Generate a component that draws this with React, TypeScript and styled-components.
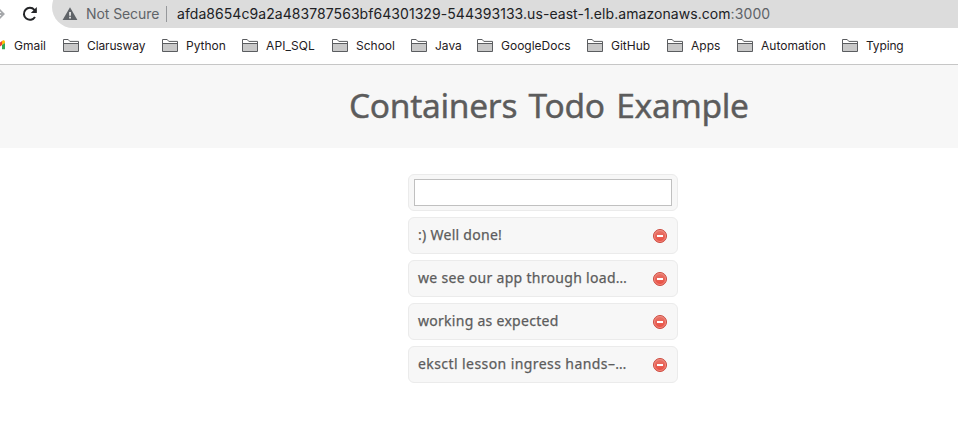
import React from 'react';
import styled, { createGlobalStyle } from 'styled-components';

const GlobalStyle = createGlobalStyle`
  *, *::before, *::after { box-sizing: border-box; }
  body { margin: 0; background: #fff; overflow: hidden; }
  svg { display: block; flex: none; }
`;

const Toolbar = styled.div`
  display: flex;
  height: 28px;
  font: 14px/28px Inter, sans-serif;
  overflow: hidden;
`;

const NavButtons = styled.div`
  display: flex;
  width: 52px;
  flex: none;
  gap: 16px;
`;

const AddressBar = styled.div`
  display: flex;
  flex: 1;
  height: 42px;
  margin-top: -14px;
  padding: 14px 0 0 10px;
  border-radius: 21px 0 0 21px;
  background: #dcdcdc;
  white-space: nowrap;
`;

const Security = styled.span`
  width: 73px;
  flex: none;
  margin-left: 8px;
  color: #5f6368;
  letter-spacing: -0.08px;
`;

const Divider = styled.i`
  flex: none;
  width: 1px;
  height: 16px;
  margin: 6px 10px 0 7px;
  background: #96989b;
`;

const Url = styled.span`
  color: #202124;
  letter-spacing: 0.06px;
`;

const Port = styled.span`
  color: #5f6368;
  letter-spacing: 0.1px;
`;

const Bookmarks = styled.nav`
  display: flex;
  height: 37px;
  border-bottom: 1px solid #c6c6c6;
  font: 12px/35px Inter, sans-serif;
  color: #1f2023;
  white-space: nowrap;
`;

const Bookmark = styled.div<{ $width: number; $spacing?: number }>`
  display: flex;
  flex: none;
  width: ${(p) => p.$width}px;
  letter-spacing: ${(p) => p.$spacing ?? 0}px;
  svg { margin: 11px 8px 0 0; }
`;

const Header = styled.header`
  height: 83px;
  padding-left: 349px;
  background: #f7f7f7;
`;

const Title = styled.h1`
  margin: 0;
  font: 400 33.5px/80px "Noto Sans", sans-serif;
  letter-spacing: -0.3px;
  word-spacing: 3px;
  color: #5c5c5c;
  -webkit-text-stroke: 0.4px #5c5c5c;
  white-space: nowrap;
`;

const TodoList = styled.main`
  display: flex;
  flex-direction: column;
  gap: 6px;
  width: 270px;
  margin: 26px 0 0 408px;
`;

const Card = styled.div`
  display: flex;
  height: 37px;
  border: 1px solid #ebebeb;
  border-radius: 6px;
  background: #f7f7f7;
`;

const InputCard = styled(Card)`
  padding: 4px 5px;
`;

const TodoInput = styled.input`
  width: 100%;
  height: 27px;
  padding: 0 6px;
  border: 1px solid #c0c0c0;
  outline: none;
  background: #fff;
  font: 14px "Noto Sans", sans-serif;
`;

const TodoText = styled.span<{ $spacing: number }>`
  flex: 1;
  padding-left: 9px;
  font: 14px/33px "Noto Sans", sans-serif;
  letter-spacing: ${(p) => p.$spacing}px;
  color: #5c5c5c;
  -webkit-text-stroke: 0.25px #5c5c5c;
  white-space: nowrap;
`;

const DeleteButton = styled.button`
  width: 16px;
  height: 16px;
  margin: 10px 9px 0 0;
  padding: 0;
  border: 0;
  background: none;
`;

const bookmarks = [
  { label: 'Clarusway', width: 99, spacing: -0.13 },
  { label: 'Python', width: 80 },
  { label: 'API_SQL', width: 90, spacing: 0.1 },
  { label: 'School', width: 79 },
  { label: 'Java', width: 66 },
  { label: 'GoogleDocs', width: 110 },
  { label: 'GitHub', width: 80 },
  { label: 'Apps', width: 70 },
  { label: 'Automation', width: 105 },
  { label: 'Typing', width: 62, spacing: -0.15 },
];

const todos = [
  { text: ':) Well done!', spacing: 0.28 },
  { text: 'we see our app through load…', spacing: 0.3 },
  { text: 'working as expected', spacing: 0.28 },
  { text: 'eksctl lesson ingress hands–…', spacing: 0.42 },
];

const FolderIcon = () => (
  <svg width="16" height="13" viewBox="0 0 16 13">
    <path d="M.5 4.5h15v8H.5z" fill="#c9c9c9" />
    <path d="M.5 12.5V.5h4.7l1.6 1.9h8.7v10.1zM.5 4.5h15" fill="none" stroke="#5b5d60" />
  </svg>
);

const RemoveIcon = () => (
  <svg width="16" height="16" viewBox="0 0 16 16">
    <defs>
      <linearGradient id="remove-fill" x2="0" y2="1">
        <stop stopColor="#e8786c" />
        <stop offset="1" stopColor="#ea4a3e" />
      </linearGradient>
    </defs>
    <circle cx="8" cy="8" r="6.5" fill="url(#remove-fill)" stroke="#cc4b40" />
    <circle cx="8" cy="8" r="5.5" fill="none" stroke="#f0958b" strokeWidth=".8" />
    <path d="M5 7h6v2H5z" fill="#fff" />
  </svg>
);

export default function App() {
  return (
    <>
      <GlobalStyle />
      <Toolbar>
        <NavButtons>
          <svg width="5" height="28" viewBox="0 0 5 28">
            <path d="M-3 14h7M-1.4 8.9 3.7 14l-5.1 5.1" fill="none" stroke="#a5a7aa" strokeWidth="1.8" />
          </svg>
          <svg width="18" height="28" viewBox="0 0 18 28">
            <path d="M14 17a6 6 0 1 1-.6-7.2L15 11.6" fill="none" stroke="#232427" strokeWidth="2" />
            <path d="M15.8 7v6h-6z" fill="#232427" />
          </svg>
        </NavButtons>
        <AddressBar>
          <svg width="16" height="28" viewBox="0 0 16 28">
            <path d="M8 7.2 15.4 20H.6z" fill="#5f6368" />
            <path d="M7.2 12h1.7v3.7H7.2zM7.2 16.8h1.7v1.6H7.2z" fill="#eee" />
          </svg>
          <Security>Not Secure</Security>
          <Divider />
          <Url>afda8654c9a2a483787563bf64301329-544393133.us-east-1.elb.amazonaws.com</Url>
          <Port>:3000</Port>
        </AddressBar>
      </Toolbar>
      <Bookmarks>
        <Bookmark $width={63}>
          <svg width="6" height="13" viewBox="0 0 6 13">
            <path d="M0 3.5 2 2v4L0 7.5z" fill="#ea4335" />
            <path d="m2 2 1.2-.7Q5 .8 5 3v1.3L2 6z" fill="#fbbc04" />
            <path d="m2 6 3-2v6.3H2z" fill="#34a853" />
          </svg>
          Gmail
        </Bookmark>
        {bookmarks.map(({ label, width, spacing }) => (
          <Bookmark key={label} $width={width} $spacing={spacing}>
            <FolderIcon />
            {label}
          </Bookmark>
        ))}
      </Bookmarks>
      <Header>
        <Title>Containers Todo Example</Title>
      </Header>
      <TodoList>
        <InputCard>
          <TodoInput aria-label="New todo" />
        </InputCard>
        {todos.map(({ text, spacing }) => (
          <Card key={text}>
            <TodoText $spacing={spacing}>{text}</TodoText>
            <DeleteButton aria-label="Delete">
              <RemoveIcon />
            </DeleteButton>
          </Card>
        ))}
      </TodoList>
    </>
  );
}
